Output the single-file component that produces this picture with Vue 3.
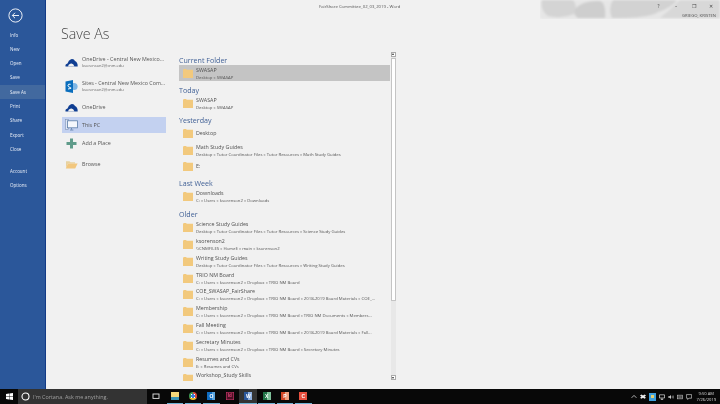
<script setup>
const menuTop = ['Info', 'New', 'Open', 'Save', 'Save As', 'Print', 'Share', 'Export', 'Close']
const menuBottom = ['Account', 'Options']

const groups = [
  { title: 'Current Folder', rows: [{ name: 'SWASAP', path: 'Desktop » SWASAP', active: true }] },
  { title: 'Today', rows: [{ name: 'SWASAP', path: 'Desktop » SWASAP' }] },
  {
    title: 'Yesterday',
    rows: [
      { name: 'Desktop' },
      { name: 'Math Study Guides', path: 'Desktop » Tutor Coordinator Files » Tutor Resources » Math Study Guides' },
      { name: 'E:' }
    ]
  },
  { title: 'Last Week', rows: [{ name: 'Downloads', path: 'C: » Users » ksorenson2 » Downloads' }] },
  {
    title: 'Older',
    rows: [
      { name: 'Science Study Guides', path: 'Desktop » Tutor Coordinator Files » Tutor Resources » Science Study Guides' },
      { name: 'ksorenson2', path: '\\\\CNMFILES » Home$ » main » ksorenson2' },
      { name: 'Writing Study Guides', path: 'Desktop » Tutor Coordinator Files » Tutor Resources » Writing Study Guides' },
      { name: 'TRIO NM Board', path: 'C: » Users » ksorenson2 » Dropbox » TRIO NM Board' },
      { name: 'COE_SWASAP_FairShare', path: 'C: » Users » ksorenson2 » Dropbox » TRIO NM Board » 2018-2019 Board Materials » COE_...' },
      { name: 'Membership', path: 'C: » Users » ksorenson2 » Dropbox » TRIO NM Board » TRIO NM Documents » Members...' },
      { name: 'Fall Meeting', path: 'C: » Users » ksorenson2 » Dropbox » TRIO NM Board » 2018-2019 Board Materials » Fall...' },
      { name: 'Secretary Minutes', path: 'C: » Users » ksorenson2 » Dropbox » TRIO NM Board » Secretary Minutes' },
      { name: 'Resumes and CVs', path: 'E: » Resumes and CVs' },
      { name: 'Workshop_Study Skills', path: 'Desktop » Workshop_Study Skills' }
    ]
  }
]

const taskIcons = [
  { id: 'files', label: '', running: true },
  { id: 'chrome', label: '', running: true },
  { id: 'outlook', label: 'O', running: true },
  { id: 'indesign', label: 'Id', running: false },
  { id: 'word', label: 'W', running: true, active: true },
  { id: 'excel', label: 'X', running: true },
  { id: 'ppt', label: 'P', running: true },
  { id: 'snag', label: 'C', running: true }
]
</script>

<template>
  <div class="screen">
    <div class="window">
      <aside class="rail">
        <svg class="back" width="15" height="15" viewBox="0 0 15 15">
          <circle cx="7.5" cy="7.5" r="6.6" fill="none" stroke="#fff" stroke-width="0.9" />
          <path d="M11 7.5H4.4M7 4.8 4.3 7.5 7 10.2" fill="none" stroke="#fff" stroke-width="0.9" />
        </svg>
        <ul class="menu">
          <li v-for="m in menuTop" :key="m" :class="{ on: m === 'Save As' }">{{ m }}</li>
        </ul>
        <ul class="menu lower">
          <li v-for="m in menuBottom" :key="m">{{ m }}</li>
        </ul>
      </aside>

      <main class="stage">
        <header class="titlebar">
          <div class="doc">FairShare Committee_02_03_2019 - Word</div>
          <div class="art">
            <svg class="clouds" width="180" height="19" viewBox="0 0 180 19">
              <path d="M0 0H180V19H0Z" fill="#e6e6e6" />
              <path d="M2 0H33Q38 6 34 14 22 19 8 16 0 10 2 0Z" fill="#d4d4d4" />
              <path d="M36 8Q44 0 60 1 66 3 65 18H38Q32 14 36 8Z" fill="#cecece" />
              <path d="M73 0H137Q131 8 118 12 110 18 72 18 68 8 73 0Z" fill="#d2d2d2" />
              <path d="M140 0H180V18H120Q130 10 140 0Z" fill="#d8d8d8" />
            </svg>
            <div class="controls">
              <span>?</span><span>–</span><span>❐</span><span>✕</span>
            </div>
            <div class="user">GRIEGO, KRISTEN</div>
          </div>
        </header>

        <h1 class="heading">Save As</h1>

        <div class="panes">
          <nav class="places">
            <div class="place tall first">
              <svg class="pico" width="13" height="9" viewBox="0 0 13 9">
                <path d="M0.5 8.5Q0 6 2.5 5.4 3.5 2 6 1.2 9 0.6 10 3 12.8 4 12.7 8.5Z" fill="#0f3e92" />
                <path d="M3 8.5Q3.2 6.2 6 5.6 8.2 5.2 9.5 8.5Z" fill="#f1f1f1" />
              </svg>
              <div class="ptext">
                <div class="pname">OneDrive - Central New Mexico...</div>
                <div class="pmail">ksorenson2@cnm.edu</div>
              </div>
            </div>
            <div class="place tall second">
              <svg class="pico sp" width="13" height="13" viewBox="0 0 13 13">
                <circle cx="9" cy="6.5" r="3.6" fill="#7db6e6" />
                <path d="M0.5 1.5 8 0V13L0.5 11.5Z" fill="#0a6ebd" />
                <path d="M5.6 4.3Q3.2 3.6 3 5.3T5.3 7.6 3 9" fill="none" stroke="#fff" stroke-width="1" />
              </svg>
              <div class="ptext">
                <div class="pname">Sites - Central New Mexico Com...</div>
                <div class="pmail">ksorenson2@cnm.edu</div>
              </div>
            </div>
            <div class="place drive">
              <svg class="pico" width="13" height="9" viewBox="0 0 13 9">
                <path d="M0.5 8.5Q0 6 2.5 5.4 3.5 2 6 1.2 9 0.6 10 3 12.8 4 12.7 8.5Z" fill="#0f3e92" />
                <path d="M3 8.5Q3.2 6.2 6 5.6 8.2 5.2 9.5 8.5Z" fill="#f1f1f1" />
              </svg>
              <div class="pname">OneDrive</div>
            </div>
            <div class="place on">
              <svg class="pico" width="13" height="12" viewBox="0 0 13 12">
                <rect x="0.5" y="0.5" width="3" height="10" fill="#dfe7f5" stroke="#7f93b5" stroke-width="0.6" />
                <rect x="2.5" y="1.8" width="10" height="7" fill="#f4f7fc" stroke="#5c7ea8" stroke-width="0.8" />
                <path d="M6.5 9v1.6M5 11h3.4" stroke="#5c7ea8" stroke-width="0.8" />
              </svg>
              <div class="pname">This PC</div>
            </div>
            <div class="place add">
              <svg class="pico" width="11" height="11" viewBox="0 0 11 11">
                <path d="M4 0.5H7V4H10.5V7H7V10.5H4V7H0.5V4H4Z" fill="#5f9b8a" />
              </svg>
              <div class="pname">Add a Place</div>
            </div>
            <div class="place browse">
              <svg class="pico" width="13" height="9" viewBox="0 0 13 9">
                <path d="M1 8V1.2H4.5L5.5 2.2H10V3.5H3Z" fill="#e8d2a0" />
                <path d="M0.8 8.6 3 3.4H12.6L10.2 8.6Z" fill="#f2c77e" />
              </svg>
              <div class="pname">Browse</div>
            </div>
          </nav>

          <section class="recent">
            <div class="list">
              <div v-for="g in groups" :key="g.title" class="group">
                <h2 class="ghead">{{ g.title }}</h2>
                <div
                  v-for="r in g.rows"
                  :key="r.name"
                  class="row"
                  :class="{ active: r.active, plain: !r.path }"
                >
                  <svg class="folder" width="10" height="9" viewBox="0 0 10 9">
                    <path d="M0 1.2V9H10V0.8H3.8L3 0H0.6Z" fill="#f2c97d" />
                  </svg>
                  <div class="rtext">
                    <div class="rname">{{ r.name }}</div>
                    <div v-if="r.path" class="rpath">{{ r.path }}</div>
                  </div>
                </div>
              </div>
            </div>
            <div class="scroll">
              <div class="sbtn"><i class="up"></i></div>
              <div class="track"><div class="thumb"></div></div>
              <div class="sbtn"><i class="down"></i></div>
            </div>
          </section>
        </div>
      </main>
    </div>

    <footer class="taskbar">
      <div class="start">
        <svg width="7" height="7" viewBox="0 0 7 7">
          <path d="M0 1 3 .6V3.3H0ZM3.4.5 7 0V3.3H3.4ZM0 3.7H3V6.4L0 6ZM3.4 3.7H7V7L3.4 6.5Z" fill="#fff" />
        </svg>
      </div>
      <div class="search">
        <svg width="9" height="9" viewBox="0 0 9 9">
          <circle cx="4.5" cy="4.5" r="3.5" fill="none" stroke="#fff" stroke-width="1.1" />
        </svg>
        <span>I'm Cortana. Ask me anything.</span>
      </div>
      <div class="tasks">
        <div class="tview">
          <svg width="8" height="7" viewBox="0 0 8 7">
            <rect x="1" y="1" width="6" height="4.4" fill="none" stroke="#e6e6e6" stroke-width="0.9" />
          </svg>
        </div>
        <div
          v-for="t in taskIcons"
          :key="t.id"
          class="task"
          :class="{ running: t.running, active: t.active }"
        >
          <span class="tile" :class="t.id">{{ t.label }}</span>
        </div>
      </div>
      <div class="tray">
        <svg width="6" height="5" viewBox="0 0 6 5"><path d="M.6 3.8 3 1.4 5.4 3.8" fill="none" stroke="#ddd" stroke-width=".8" /></svg>
        <svg width="6" height="6" viewBox="0 0 6 6"><path d="M1.5.5 3 1.5 4.5.5 6 1.6 4.5 2.7 6 3.8 4.5 4.8 3 3.8 1.5 4.8 0 3.8 1.5 2.7 0 1.6Z" fill="#eee" /></svg>
        <svg width="7" height="8" viewBox="0 0 7 8"><rect width="7" height="8" fill="#3f9fdc" /><rect x="2" y="2" width="3" height="3" fill="#e6d070" /></svg>
        <svg width="6" height="6" viewBox="0 0 6 6"><path d="M.5.8H5.5V4H.5ZM3 4V5.5M1.8 5.5H4.2" fill="none" stroke="#ddd" stroke-width=".7" /></svg>
        <svg width="6" height="6" viewBox="0 0 6 6"><path d="M.3 2.2H1.6L3 1V5L1.6 3.8H.3Z" fill="#ccc" /><path d="M4 2Q4.8 3 4 4M5 1.3Q6 3 5 4.7" fill="none" stroke="#ccc" stroke-width=".5" /></svg>
        <svg width="6" height="6" viewBox="0 0 6 6"><rect x=".4" y="1.2" width="5.2" height="3.6" fill="none" stroke="#bbb" stroke-width=".7" /><path d="M1.2 2.6H4.8M1.2 3.6H4.8" stroke="#bbb" stroke-width=".5" /></svg>
        <svg width="6" height="6" viewBox="0 0 6 6"><path d="M.4.6H5.6V4.2H3L1.6 5.5V4.2H.4Z" fill="none" stroke="#ccc" stroke-width=".7" /></svg>
        <div class="clock">
          <div>9:50 AM</div>
          <div>7/26/2019</div>
        </div>
      </div>
    </footer>
  </div>
</template>

<style>
html, body { margin: 0; padding: 0; background: #f1f1f1; }
</style>

<style scoped>
.screen {
  width: 720px;
  height: 404px;
  display: flex;
  flex-direction: column;
  overflow: hidden;
  font-family: "Open Sans", "Liberation Sans", sans-serif;
  filter: blur(0.3px);
}
.window { height: 389px; display: flex; }

.rail {
  width: 45px;
  background: #2b579a;
  border-right: 1px solid #123a86;
  display: flex;
  flex-direction: column;
  flex: none;
  padding-top: 7.5px;
}
.back { display: block; margin-left: 7.5px; margin-bottom: 5px; }
.menu { list-style: none; margin: 0; padding: 0; }
.menu li {
  height: 14.3px;
  line-height: 14.3px;
  padding-left: 10px;
  color: #e9eef7;
  font-size: 4.5px;
}
.menu li.on { background: #42699f; }
.lower { margin-top: 8px; }

.stage { flex: 1; min-width: 0; display: flex; flex-direction: column; background: #f1f1f1; }
.titlebar { height: 19px; position: relative; flex: none; }
.doc {
  position: absolute;
  left: 273px; top: 3px;
  font-size: 4.25px;
  line-height: 6px;
  color: #555;
}
.art { position: absolute; right: 0; top: 0; width: 180px; height: 19px; overflow: hidden; }
.clouds { display: block; filter: blur(1px); }
.controls {
  position: absolute;
  right: 6px; top: 3px;
  display: flex;
  gap: 11.5px;
  font-size: 4.5px;
  line-height: 6px;
  color: #444;
}
.controls span { width: 6px; text-align: center; }
.user {
  position: absolute;
  right: 4px; top: 12.5px;
  font-size: 4.2px;
  line-height: 6px;
  color: #555;
}

.heading {
  margin: 5px 0 0 15px;
  height: 19px;
  font-size: 14.2px;
  line-height: 19px;
  font-weight: 300;
  color: #444;
  font-family: "Open Sans", sans-serif;
}
.panes { display: flex; margin-left: 16px; margin-top: 3px; min-height: 0; flex: 1; }

.places { width: 104px; flex: none; padding-top: 8px; }
.place {
  height: 16px;
  display: flex;
  align-items: center;
  padding-left: 3px;
  gap: 4px;
}
.place.tall { height: 17px; }
.place.first { margin-bottom: 7px; }
.place.second { margin-bottom: 4px; }
.place.drive { margin-bottom: 2px; }
.place.on { background: #c3d1f0; margin-bottom: 2.5px; }
.place.add { margin-bottom: 4.5px; }
.pico { flex: none; width: 13px; }
.pname { font-size: 5.35px; line-height: 7px; color: #555; white-space: nowrap; }
.pmail { font-size: 4px; line-height: 6px; color: #666; white-space: nowrap; }
.ptext { min-width: 0; }

.recent { margin-left: 13px; width: 217px; display: flex; flex: none; }
.list { width: 211px; height: 334.5px; flex: none; overflow: hidden; padding-top: 8.5px; box-sizing: border-box; }
.ghead {
  margin: 0;
  height: 10.5px;
  font-size: 7.1px;
  line-height: 10.5px;
  font-weight: 400;
  color: #3f5f95;
}
.group + .group { margin-top: 3.5px; }
.row {
  height: 16.8px;
  display: flex;
  align-items: center;
  padding-left: 4px;
  gap: 3px;
}
.row.active { background: #c4c4c4; height: 16px; }
.row.plain { height: 16px; }
.folder { flex: none; }
.rtext { min-width: 0; }
.rname { font-size: 5.3px; line-height: 7px; color: #505050; white-space: nowrap; }
.rpath { font-size: 4.25px; line-height: 6px; color: #555; white-space: nowrap; }

.scroll {
  width: 5.5px;
  margin-left: 0.5px;
  margin-top: 5.5px;
  height: 328.5px;
  background: #e8e8e8;
  display: flex;
  flex-direction: column;
  flex: none;
}
.sbtn {
  height: 5px;
  background: #fff;
  border: 0.5px solid #aaa;
  box-sizing: border-box;
  display: flex;
  align-items: center;
  justify-content: center;
  flex: none;
}
.sbtn i { width: 0; height: 0; border-left: 1.5px solid transparent; border-right: 1.5px solid transparent; }
.sbtn .up { border-bottom: 2px solid #333; }
.sbtn .down { border-top: 2px solid #333; }
.track { flex: 1; min-height: 0; padding-top: 1px; }
.thumb { height: 243px; background: #fff; border: 0.5px solid #c4c4c4; box-sizing: border-box; }

.taskbar {
  height: 15px;
  flex: none;
  background: #080808;
  display: flex;
  align-items: center;
}
.start { width: 18px; display: flex; justify-content: center; align-items: center; flex: none; }
.search {
  width: 129px;
  height: 15px;
  background: #333;
  display: flex;
  align-items: center;
  gap: 3px;
  padding-left: 3px;
  box-sizing: border-box;
  font-size: 5.4px;
  color: #a0a0a0;
  flex: none;
}
.tasks { display: flex; height: 15px; flex: none; }
.tview { width: 18.5px; display: flex; align-items: center; justify-content: center; }
.task {
  width: 16.4px;
  height: 15px;
  margin: 0 1px;
  display: flex;
  align-items: center;
  justify-content: center;
  box-sizing: border-box;
  border-bottom: 1px solid transparent;
}
.task.running { border-bottom-color: #6fb3d6; }
.task.active { background: #333; margin: 0; width: 18.4px; }
.tile {
  width: 8px;
  height: 8px;
  display: flex;
  align-items: center;
  justify-content: center;
  font-size: 5px;
  line-height: 8px;
  font-weight: 700;
  color: #fff;
  font-family: "Liberation Sans", sans-serif;
}
.tile.files { background: linear-gradient(#f3d67a 0 60%, #3a93b5 60% 100%); }
.tile.chrome {
  border-radius: 50%;
  background: radial-gradient(circle, #3b7dd8 0 28%, #fff 30% 38%, transparent 40%), conic-gradient(#d8483a 0 34%, #e8bd2c 34% 66%, #3f9a54 66% 100%);
}
.tile.outlook { background: linear-gradient(90deg, #0f6cc0 0 60%, #5aa5e0 60% 100%); }
.tile.indesign { background: #4c0f24; color: #e0447a; font-size: 4.5px; box-shadow: inset 0 0 0 0.6px #c8386a; }
.tile.word { background: linear-gradient(90deg, #2b579a 0 55%, #8fb0e0 55% 100%); }
.tile.excel { background: linear-gradient(90deg, #1f7145 0 55%, #7dbf98 55% 100%); }
.tile.ppt { background: linear-gradient(90deg, #d24726 0 55%, #f0a080 55% 100%); }
.tile.snag { background: #e8503f; }
.tray {
  margin-left: auto;
  display: flex;
  align-items: center;
  gap: 3px;
  padding-right: 4px;
}
.clock {
  color: #ddd;
  font-size: 4.1px;
  line-height: 6px;
  text-align: center;
  margin-left: 2px;
  white-space: nowrap;
}
</style>
